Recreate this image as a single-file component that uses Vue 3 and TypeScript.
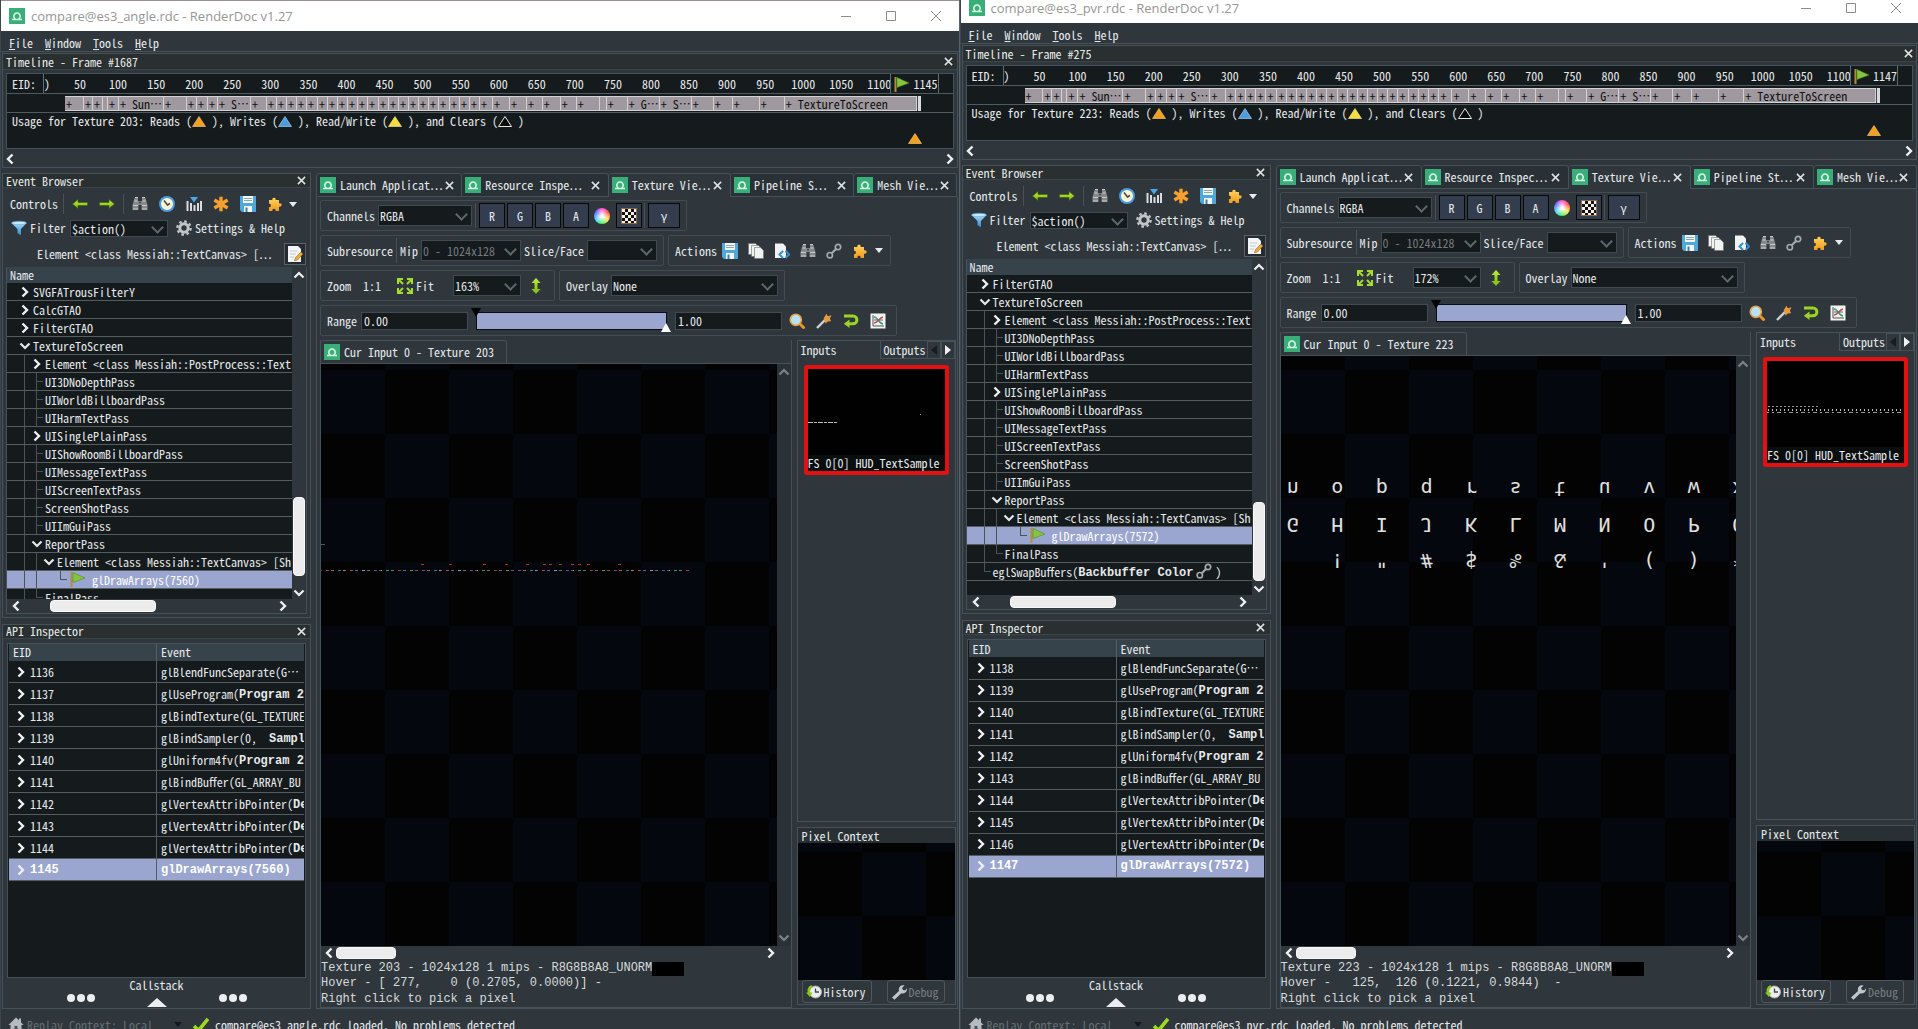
<script setup lang="ts">
interface TreeRow { cells: string; text: string; bold?: string; tail?: string; flag?: boolean; selected?: boolean }
interface Call { id: number; text: string; bold?: string; more?: boolean; selected?: boolean }
interface Tab { label: string; weight: number; active?: boolean }
interface Capture {
  key: string; file: string; frame: number; last: number; texture: number; zoom: string; hover: string
  tabs: Tab[]; tree: TreeRow[]; calls: Call[]; scroll: [number, number, number]; offset: boolean
}

const ticks: number[] = Array.from({ length: 22 }, (_, i) => (i + 1) * 50)

const starts: [number, string][] = [
  [65, '+'], [84, '+'], [93, '+'], [103, ''], [108, '+'], [119, '+ Sun'], [164, '+'], [187, '+'], [197, '+'], [208, '+'],
  [218, '+ S'], [251, '+'], [267, '+'],
  ...Array.from({ length: 20 }, (_, i): [number, string] => [277 + Math.round(i * 10.15), '+']),
  [480, '+'], [493, '+'], [510, '+'], [527, '+'], [543, '+'], [561, '+'], [577, '+'], [600, ''], [607, '+'],
  [628, '+ G'], [660, '+ S'], [692, '+'], [714, '+'], [733, '+'], [760, '+'], [785, '+ TextureToScreen'],
]
const shortened = ['+ Sun', '+ G', '+ S']
const segments = starts.map(([x, label], i) => ({
  label, more: shortened.includes(label), weight: (starts[i + 1]?.[0] ?? 917) - x,
}))

const share = (weight: number) => ({ flex: `${weight} 1 ${weight}px` })

const passes = (draw: string): TreeRow[] => [
  { cells: ' v', text: 'TextureToScreen' },
  { cells: ' |>', text: 'Element <class Messiah::PostProcess::Text:' },
  { cells: ' |t', text: 'UI3DNoDepthPass' },
  { cells: ' |t', text: 'UIWorldBillboardPass' },
  { cells: ' |t', text: 'UIHarmTextPass' },
  { cells: ' |>', text: 'UISinglePlainPass' },
  { cells: ' |t', text: 'UIShowRoomBillboardPass' },
  { cells: ' |t', text: 'UIMessageTextPass' },
  { cells: ' |t', text: 'UIScreenTextPass' },
  { cells: ' |t', text: 'ScreenShotPass' },
  { cells: ' |t', text: 'UIImGuiPass' },
  { cells: ' |v', text: 'ReportPass' },
  { cells: ' ||v', text: 'Element <class Messiah::TextCanvas> [Sh' },
  { cells: ' || L', text: draw, flag: true, selected: true },
  { cells: ' |L', text: 'FinalPass' },
]

const calls = (first: number, program: string, draw: string): Call[] => [
  { id: first, text: 'glBlendFuncSeparate(G', more: true },
  { id: first + 1, text: 'glUseProgram(', bold: 'Program ' + program },
  { id: first + 2, text: 'glBindTexture(GL_TEXTURE' },
  { id: first + 3, text: 'glBindSampler(0,  ', bold: 'Sampl' },
  { id: first + 4, text: 'glUniform4fv(', bold: 'Program ' + program },
  { id: first + 5, text: 'glBindBuffer(GL_ARRAY_BU' },
  { id: first + 6, text: 'glVertexAttribPointer(', bold: 'De' },
  { id: first + 7, text: 'glVertexAttribPointer(', bold: 'De' },
  { id: first + 8, text: 'glVertexAttribPointer(', bold: 'De' },
  { id: first + 9, text: draw, selected: true },
]

const captures: Capture[] = [
  {
    key: 'angle', file: 'compare@es3_angle.rdc', frame: 1687, last: 1145, texture: 203, zoom: '163%',
    hover: 'Hover - [ 277,    0 (0.2705, 0.0000)] -', offset: false, scroll: [216, 77, 11],
    tabs: [
      { label: 'Launch Applicat', weight: 146 }, { label: 'Resource Inspe', weight: 146 },
      { label: 'Texture Vie', weight: 122, active: true }, { label: 'Pipeline S', weight: 123 }, { label: 'Mesh Vie', weight: 103 },
    ],
    tree: [
      { cells: ' >', text: 'SVGFATrousFilterY' }, { cells: ' >', text: 'CalcGTAO' }, { cells: ' >', text: 'FilterGTAO' },
      ...passes('glDrawArrays(7560)'),
    ],
    calls: calls(1136, '20', 'glDrawArrays(7560)'),
  },
  {
    key: 'pvr', file: 'compare@es3_pvr.rdc', frame: 275, last: 1147, texture: 223, zoom: '172%',
    hover: 'Hover -   125,  126 (0.1221, 0.9844)  -', offset: true, scroll: [230, 78, 2],
    tabs: [
      { label: 'Launch Applicat', weight: 146 }, { label: 'Resource Inspec', weight: 147 },
      { label: 'Texture Vie', weight: 122, active: true }, { label: 'Pipeline St', weight: 123 }, { label: 'Mesh Vie', weight: 103 },
    ],
    tree: [
      { cells: ' >', text: 'FilterGTAO' },
      ...passes('glDrawArrays(7572)'),
      { cells: ' L', text: 'eglSwapBuffers(', bold: 'Backbuffer Color', tail: ')' },
    ],
    calls: calls(1138, '22', 'glDrawArrays(7572)'),
  },
]

const glyphRows: string[] = ['nopqrstuvwx', 'GHIJKLMNOPQ', ' !"#$%&\'()*']

const palette = ['#a83838', '#2f8f6f', '#4a55c0', '#9a9a9a', '#b84848', '#2d7a8a', '#7a459a', '#888833']
const sparks = Array.from({ length: 92 }, (_, i) => ({
  x: i * 4 + ((i * 7) % 3), w: 1 + ((i * 5) % 3), c: palette[(i * 5 + (i % 3)) % palette.length],
}))
const redSparks = [100, 128, 162, 184, 205, 222, 228, 238, 250, 257, 266, 297]
const miniDots = Array.from({ length: 34 }, (_, i) => i)
</script>

<template>
  <svg class="defs" aria-hidden="true">
    <defs>
      <linearGradient id="g-gold" x1="0" y1="0" x2="0" y2="1"><stop offset="0" stop-color="#ffd45e" /><stop offset="1" stop-color="#f29a1c" /></linearGradient>
      <linearGradient id="g-blue" x1="0" y1="0" x2="0" y2="1"><stop offset="0" stop-color="#a8dcfa" /><stop offset="1" stop-color="#2a86cf" /></linearGradient>
      <linearGradient id="g-green" x1="0" y1="0" x2="0" y2="1"><stop offset="0" stop-color="#c4ee3a" /><stop offset="1" stop-color="#79b80e" /></linearGradient>
    </defs>
    <symbol id="i-logo" viewBox="0 0 16 16"><rect width="16" height="16" fill="#38ae78" /><path d="M3 11.500h10M6.400 11a3.200 3.200 0 1 1 3.200 0" fill="none" stroke="#d8f5e6" stroke-width="1.600" /></symbol>
    <symbol id="i-x" viewBox="0 0 10 10"><path d="M1 1l8 8M9 1L1 9" stroke="#dfe3e5" stroke-width="1.700" /></symbol>
    <symbol id="i-left" viewBox="0 0 8 12"><path d="M6.500 1.500L2 6l4.500 4.500" fill="none" stroke="#eef0f1" stroke-width="2.400" /></symbol>
    <symbol id="i-right" viewBox="0 0 8 12"><path d="M1.500 1.500L6 6l-4.500 4.500" fill="none" stroke="#eef0f1" stroke-width="2.400" /></symbol>
    <symbol id="i-down" viewBox="0 0 12 8"><path d="M1.500 1.500L6 6l4.500-4.500" fill="none" stroke="currentColor" stroke-width="2.200" /></symbol>
    <symbol id="i-up" viewBox="0 0 12 8"><path d="M1.500 6.500L6 2l4.500 4.500" fill="none" stroke="currentColor" stroke-width="2.200" /></symbol>
    <symbol id="i-prev" viewBox="0 0 16 16"><path d="M0.500 8L6 3.500v3h9.500v3H6v3z" fill="url(#g-green)" stroke="#3d5c0a" stroke-width=".6" /></symbol>
    <symbol id="i-next" viewBox="0 0 16 16"><path d="M15.500 8L10 3.500v3H.5v3H10v3z" fill="url(#g-green)" stroke="#3d5c0a" stroke-width=".6" /></symbol>
    <symbol id="i-find" viewBox="0 0 16 16"><path d="M2.500 2h3.500v3h4V2h3.500l2 7v5H9.500V9h-3v5H.5V9z" fill="#85898c" /><path d="M3 1.500h3M10 1.500h3M2.500 5h3M10.500 5h3M1 9.500h5M10 9.500h5M1 13h5M10 13h5" stroke="#c9ccce" /><path d="M7 6.500h2" stroke="#444" stroke-width="1.500" /></symbol>
    <symbol id="i-clock" viewBox="0 0 16 16"><circle cx="8" cy="8" r="7" fill="#fdf6d4" stroke="#4a9be0" stroke-width="2" /><path d="M5 4.500L8.500 9l2.500-1.500" fill="none" stroke="#444" stroke-width="1.500" /></symbol>
    <symbol id="i-bars" viewBox="0 0 16 16"><path d="M1.500 5v10M5 7v8M8.500 9v6M12 7v8M15 5v10" stroke="#d9dcde" stroke-width="2" /><path d="M4 1h8L8 6.500z" fill="#4ca6e8" /></symbol>
    <symbol id="i-star" viewBox="0 0 16 16"><path d="M8 .8v14.400M1.400 4l13.200 8M14.600 4L1.400 12" stroke="#f7a02e" stroke-width="3.400" /></symbol>
    <symbol id="i-save" viewBox="0 0 16 16"><path d="M0 0h16v16H2l-2-2z" fill="#4fa8dc" /><path d="M3 0h10v7H3zM4 10h8v6H4z" fill="#f3f6f8" /><path d="M4 2.500h8M4 4.500h8" stroke="#8aa" /><path d="M5.500 11.500h2V16h-2z" fill="#3b7fae" /></symbol>
    <symbol id="i-puzzle" viewBox="0 0 16 16"><path d="M2 4h3.500C4.200 1 9.800 1 8.500 4H12v3.500c3.500-1.300 3.500 4.300 0 3V15H8.500c1-3-4-3-3 0H2v-4c2.500 1 2.500-4 0-3.200z" fill="url(#g-gold)" /></symbol>
    <symbol id="i-funnel" viewBox="0 0 16 16"><path d="M.5 3h15L10 9v6.500L6.500 13V9z" fill="url(#g-blue)" /><ellipse cx="8" cy="3" rx="7.500" ry="1.800" fill="#c6e9fb" stroke="#4a9fd8" stroke-width=".6" /></symbol>
    <symbol id="i-gear" viewBox="0 0 16 16"><circle cx="8" cy="8" r="4.200" fill="none" stroke="#c3c6c8" stroke-width="3" /><circle cx="8" cy="8" r="6.600" fill="none" stroke="#c3c6c8" stroke-width="2.400" stroke-dasharray="2.600 2.580" /></symbol>
    <symbol id="i-edit" viewBox="0 0 16 16"><path d="M1 0h10l3 3v13H1z" fill="#f4f5f6" /><path d="M3 5h7M3 8h6M3 11h4" stroke="#c6cacc" /><path d="M7.500 15l.8-3.200L14 6l2 2-5.600 6z" fill="#f1a93a" stroke="#80561a" stroke-width=".5" /></symbol>
    <symbol id="i-pages" viewBox="0 0 16 16"><g fill="#f1f2f2" stroke="#6a6f72" stroke-width=".6"><path d="M.5.500h7l2 2v9h-9z" /><path d="M3.500 2.500h7l2 2v9h-9z" /><path d="M6.500 4.500h6l3 3v8h-9z" /></g></symbol>
    <symbol id="i-code" viewBox="0 0 16 16"><path d="M1 .5h8l3 3V15H1z" fill="#f1f2f2" /><path d="M9 8l-3.500 3.500L9 15M11.500 8l3.500 3.500-3.500 3.500" fill="none" stroke="#2f8fd0" stroke-width="2" /></symbol>
    <symbol id="i-link" viewBox="0 0 16 16"><g fill="none" stroke="#a5a9ab" stroke-width="1.700"><circle cx="3.800" cy="12.200" r="2.700" /><circle cx="12" cy="4" r="2.700" /><path d="M5.500 10.500l5-5" stroke-width="2.200" /></g></symbol>
    <symbol id="i-fit" viewBox="0 0 16 16"><path d="M1 6V1h5M10 1h5v5M15 10v5h-5M6 15H1v-5" fill="none" stroke="#a6dc2c" stroke-width="2" /><path d="M2 2l4 4M14 2l-4 4M14 14l-4-4M2 14l4-4" stroke="#a6dc2c" stroke-width="2" /></symbol>
    <symbol id="i-updown" viewBox="0 0 10 16"><path d="M5 0l4.500 5H6.500v6h3L5 16 .5 11h3V5h-3z" fill="url(#g-green)" /></symbol>
    <symbol id="i-lens" viewBox="0 0 16 16"><path d="M10.500 10.500l4 4" stroke="#e8952a" stroke-width="3" stroke-linecap="round" /><circle cx="6.800" cy="6.800" r="5.600" fill="#b9e2f7" stroke="#e4a04a" stroke-width="1.600" /></symbol>
    <symbol id="i-wand" viewBox="0 0 16 16"><path d="M1 15l8-8" stroke="#cfd2d4" stroke-width="2.400" /><path d="M7.500 5.500L10.500.8l1.300 2.400 3.700-1-1.600 3.400 1.200 2.600-3.400.2-2 2.200z" fill="#e79a44" /></symbol>
    <symbol id="i-loop" viewBox="0 0 16 16"><path d="M1 3h9a3.800 3.800 0 0 1 0 7.800H6" fill="none" stroke="#9bd422" stroke-width="3" /><path d="M6.500 6.500v8.500L.8 10.800z" fill="#9bd422" /></symbol>
    <symbol id="i-graph" viewBox="0 0 16 16"><rect x=".5" y=".5" width="15" height="15" fill="#f3f4f4" /><path d="M3 2v11h11" fill="none" stroke="#555" /><path d="M4 4c4 0 5 7 9 7" fill="none" stroke="#3c9c4a" stroke-width="1.500" /><path d="M4 10c4 0 5-5 9-6" fill="none" stroke="#d2493a" stroke-width="1.500" /><path d="M4 7h9" stroke="#3e6fc4" /></symbol>
    <symbol id="i-flag" viewBox="0 0 16 16"><path d="M1.500 1v15" stroke="#b98a3a" stroke-width="2" /><path d="M3 1.500L15 7 3 11.500z" fill="#86c440" stroke="#4f8c22" stroke-width=".6" /></symbol>
    <symbol id="i-tri" viewBox="0 0 14 11"><path d="M7 .5L13.500 10.500H.5z" /></symbol>
    <symbol id="i-history" viewBox="0 0 16 16"><circle cx="9.500" cy="8" r="6" fill="#eceeee" stroke="#a9adaf" /><path d="M9.500 4.500V8H13" fill="none" stroke="#444" stroke-width="1.300" /><path d="M6 2.200C2.500 3.500 2 7 3.200 9.500" fill="none" stroke="#86c81e" stroke-width="2.400" /><path d="M0 8.500h6.500l-2.600 4.500z" fill="#86c81e" /></symbol>
    <symbol id="i-wrench" viewBox="0 0 16 16"><path d="M1 13.500L8 7C7 3 10 .5 13.500 1.500L11 4l1 2 2.500.2 1.500-2c.5 3.500-2.500 6-6 5.200L3.500 15.800z" fill="#c0c6cc" /></symbol>
    <symbol id="i-home" viewBox="0 0 16 16"><path d="M8 .5L.5 8H2.500v8h11V8h2L13 5.300V1.500h-2v1.800z" fill="#b5bac0" /><path d="M6.500 9h3v7h-3z" fill="#4b535a" /></symbol>
    <symbol id="i-check" viewBox="0 0 16 16"><path d="M1 9l4.500 4.500L15 2" fill="none" stroke="#9adb1e" stroke-width="3.600" /></symbol>
  </svg>

  <main class="desktop">
    <section v-for="c in captures" :key="c.key" class="win" :class="{ raised: c.offset }">
      <header class="title-bar">
        <svg class="ic"><use href="#i-logo" /></svg>
        <h1>{{ c.file }} - RenderDoc v1.27</h1>
        <button class="win-btn" aria-label="Minimise"><svg width="10" height="10"><path d="M0 5.500h10" stroke="#8c8c8c" /></svg></button>
        <button class="win-btn" aria-label="Maximise"><svg width="10" height="10"><path d="M.5.500h9v9h-9z" fill="none" stroke="#8c8c8c" /></svg></button>
        <button class="win-btn" aria-label="Close"><svg width="10" height="10"><path d="M0 0l10 10M10 0L0 10" stroke="#8c8c8c" /></svg></button>
      </header>

      <nav class="menu">
        <button><u>F</u>ile</button><button><u>W</u>indow</button><button><u>T</u>ools</button><button><u>H</u>elp</button>
      </nav>

      <section class="timeline">
        <div class="dock-title"><h2>Timeline - Frame #{{ c.frame }}</h2><button class="x" aria-label="Close timeline"><svg><use href="#i-x" /></svg></button></div>
        <div class="tl-box">
          <div class="tl-ticks">
            <span class="eid">EID:</span><span class="zero">)</span>
            <div class="ticks"><span v-for="t in ticks" :key="t">{{ t }}</span></div>
            <span class="current"><svg class="ic"><use href="#i-flag" /></svg>{{ c.last }}</span>
          </div>
          <div class="tl-bars">
            <div v-for="(s, i) in segments" :key="i" class="seg" :style="share(s.weight)">{{ s.label }}<span v-if="s.more" class="dots">⋯</span></div>
            <i class="seg-end"></i>
          </div>
          <div class="tl-usage">
            <p>Usage for Texture {{ c.texture }}: Reads (<svg class="tri read"><use href="#i-tri" /></svg> ), Writes (<svg class="tri write"><use href="#i-tri" /></svg> ), Read/Write (<svg class="tri rw"><use href="#i-tri" /></svg> ), and Clears (<svg class="tri clear"><use href="#i-tri" /></svg> )</p>
            <svg class="tri mark"><use href="#i-tri" /></svg>
          </div>
        </div>
        <div class="h-scroll wide"><svg class="ch"><use href="#i-left" /></svg><svg class="ch"><use href="#i-right" /></svg></div>
      </section>

      <div class="body">
        <div class="left">
          <section class="dock events">
            <div class="dock-title"><h2>Event Browser</h2><button class="x" aria-label="Close event browser"><svg><use href="#i-x" /></svg></button></div>
            <div class="controls">
              <span class="lbl">Controls</span><i class="sep"></i>
              <button aria-label="Back"><svg class="ic"><use href="#i-prev" /></svg></button>
              <button aria-label="Forward"><svg class="ic"><use href="#i-next" /></svg></button><i class="sep"></i>
              <button aria-label="Find"><svg class="ic"><use href="#i-find" /></svg></button>
              <button aria-label="Time"><svg class="ic"><use href="#i-clock" /></svg></button>
              <button aria-label="Columns"><svg class="ic"><use href="#i-bars" /></svg></button>
              <button aria-label="Bookmark"><svg class="ic"><use href="#i-star" /></svg></button>
              <button aria-label="Export"><svg class="ic"><use href="#i-save" /></svg></button>
              <button aria-label="Extensions"><svg class="ic"><use href="#i-puzzle" /></svg></button><i class="caret"></i>
            </div>
            <div class="filter">
              <svg class="ic"><use href="#i-funnel" /></svg>
              <label :for="'filter-' + c.key">Filter</label>
              <span class="combo w98"><select :id="'filter-' + c.key"><option>$action()</option></select></span>
              <button class="settings"><svg class="ic"><use href="#i-gear" /></svg>Settings &amp; Help</button>
            </div>
            <div class="crumb"><span>Element &lt;class Messiah::TextCanvas&gt; [<span class="dots">⋯</span></span><button class="edit" aria-label="Edit"><svg class="ic"><use href="#i-edit" /></svg></button></div>
            <div class="tree-box">
              <div class="tree-main">
                <div class="tree-head">Name</div>
                <div class="tree-rows">
                  <div v-for="(r, i) in c.tree" :key="i" class="row" :class="{ sel: r.selected }">
                    <span v-for="(g, j) in r.cells.split('')" :key="j" class="g" :class="{ line: g === '|' || g === 't', half: g === 'L', tee: g === 't' || g === 'L' }">
                      <svg v-if="g === '>'" class="ch"><use href="#i-right" /></svg>
                      <svg v-if="g === 'v'" class="cv"><use href="#i-down" /></svg>
                    </span>
                    <svg v-if="r.flag" class="ic flag"><use href="#i-flag" /></svg>
                    <span class="row-text">{{ r.text }}<b v-if="r.bold">{{ r.bold }}</b><svg v-if="r.tail" class="ic link"><use href="#i-link" /></svg>{{ r.tail }}</span>
                  </div>
                </div>
                <div class="h-scroll"><svg class="ch"><use href="#i-left" /></svg><i class="thumb tree-thumb"></i><svg class="ch"><use href="#i-right" /></svg></div>
              </div>
              <div class="v-scroll light">
                <svg class="cv"><use href="#i-up" /></svg>
                <div class="track"><i :style="{ flexGrow: c.scroll[0] }"></i><i class="thumb" :style="{ flexGrow: c.scroll[1] }"></i><i :style="{ flexGrow: c.scroll[2] }"></i></div>
                <svg class="cv"><use href="#i-down" /></svg>
              </div>
            </div>
          </section>

          <section class="dock api">
            <div class="dock-title"><h2>API Inspector</h2><button class="x" aria-label="Close API inspector"><svg><use href="#i-x" /></svg></button></div>
            <div class="api-box">
              <table>
                <thead><tr><th>EID</th><th>Event</th></tr></thead>
                <tbody>
                  <tr v-for="a in c.calls" :key="a.id" :class="{ sel: a.selected }">
                    <td><div class="cell"><svg class="ch"><use href="#i-right" /></svg>{{ a.id }}</div></td>
                    <td><div class="cell">{{ a.text }}<b v-if="a.bold">{{ a.bold }}</b><span v-if="a.more" class="dots">⋯</span></div></td>
                  </tr>
                </tbody>
              </table>
            </div>
            <button class="callstack">
              <span>Callstack</span>
              <span class="grip"><i></i><i></i><i></i><em></em><i></i><i></i><i></i></span>
            </button>
          </section>
        </div>

        <section class="main">
          <div class="tabs">
            <div v-for="t in c.tabs" :key="t.label" class="tab" :class="{ active: t.active }" :style="share(t.weight)">
              <svg class="ic"><use href="#i-logo" /></svg><span class="tab-label">{{ t.label }}<span class="dots">⋯</span></span><button class="x" :aria-label="'Close ' + t.label"><svg><use href="#i-x" /></svg></button>
            </div>
          </div>
          <div class="viewer">
            <div class="bars">
              <div class="group">
                <label :for="'ch-' + c.key">Channels</label>
                <span class="combo w94"><select :id="'ch-' + c.key"><option>RGBA</option></select></span><i class="sep"></i>
                <button class="chan">R</button><button class="chan">G</button><button class="chan">B</button><button class="chan">A</button>
                <button class="wheel" aria-label="Colour"><i></i></button>
                <button class="chan" aria-label="Checkerboard"><i class="check"></i></button><i class="sep"></i>
                <button class="chan gamma">γ</button>
              </div>
            </div>
            <div class="bars">
              <div class="group">
                <span>Subresource</span><i class="sep"></i>
                <label :for="'mip-' + c.key">Mip</label>
                <span class="combo w100"><select :id="'mip-' + c.key" disabled><option>0 - 1024x128</option></select></span>
                <label :for="'face-' + c.key">Slice/Face</label>
                <span class="combo w70"><select :id="'face-' + c.key" disabled><option></option></select></span>
              </div>
              <div class="group actions">
                <span>Actions</span>
                <button aria-label="Save"><svg class="ic"><use href="#i-save" /></svg></button>
                <button aria-label="Copy"><svg class="ic"><use href="#i-pages" /></svg></button>
                <button aria-label="Open shader"><svg class="ic"><use href="#i-code" /></svg></button>
                <button aria-label="Find usage"><svg class="ic"><use href="#i-find" /></svg></button>
                <button aria-label="Link"><svg class="ic"><use href="#i-link" /></svg></button>
                <button aria-label="Extensions"><svg class="ic"><use href="#i-puzzle" /></svg></button><i class="caret"></i>
              </div>
            </div>
            <div class="bars">
              <div class="group zoom">
                <label :for="'zoom-' + c.key">Zoom</label><button class="one">1:1</button>
                <button class="fit"><svg class="ic"><use href="#i-fit" /></svg>Fit</button>
                <span class="combo w68"><select :id="'zoom-' + c.key"><option>{{ c.zoom }}</option></select></span>
                <button class="flip" aria-label="Flip"><svg width="10" height="16"><use href="#i-updown" /></svg></button>
              </div>
              <div class="group">
                <label :for="'ov-' + c.key">Overlay</label>
                <span class="combo w167"><select :id="'ov-' + c.key"><option>None</option></select></span>
              </div>
            </div>
            <div class="bars">
              <div class="group range">
                <label :for="'lo-' + c.key">Range</label><input :id="'lo-' + c.key" type="text" value="0.00" />
                <span class="slider"><i class="lo"></i><i class="hi"></i></span>
                <input type="text" value="1.00" aria-label="Range maximum" />
                <button aria-label="Zoom range"><svg class="ic"><use href="#i-lens" /></svg></button>
                <button aria-label="Autofit"><svg class="ic"><use href="#i-wand" /></svg></button>
                <button aria-label="Reset"><svg class="ic"><use href="#i-loop" /></svg></button>
                <button aria-label="Histogram"><svg class="ic"><use href="#i-graph" /></svg></button>
              </div>
            </div>

            <div class="split">
              <div class="image">
                <div class="image-tab"><svg class="ic"><use href="#i-logo" /></svg>Cur Input 0 - Texture {{ c.texture }}</div>
                <div class="image-row">
                  <div class="canvas checker">
                    <svg v-if="!c.offset" class="sparks" width="456" height="40">
                      <rect v-for="(s, i) in sparks" :key="i" :x="s.x" y="27" :width="s.w" height="1" :fill="s.c" />
                      <rect v-for="x in redSparks" :key="x" :x="x" y="21" width="3" height="1" fill="#b82e24" />
                      <rect x="0" y="1" width="4" height="1" fill="#555" />
                    </svg>
                    <div v-else class="glyphs">
                      <div v-for="row in glyphRows" :key="row"><span v-for="(g, i) in row.split('')" :key="i">{{ g }}</span></div>
                    </div>
                  </div>
                  <div class="v-scroll dim"><svg class="cv"><use href="#i-up" /></svg><svg class="cv"><use href="#i-down" /></svg></div>
                </div>
                <div class="h-scroll canvas-scroll"><svg class="ch"><use href="#i-left" /></svg><i class="thumb image-thumb"></i><svg class="ch"><use href="#i-right" /></svg></div>
                <div class="info">
                  <p>Texture {{ c.texture }} - 1024x128 1 mips - R8G8B8A8_UNORM<i></i></p>
                  <p>{{ c.hover }}</p>
                  <p>Right click to pick a pixel</p>
                </div>
              </div>

              <div class="side">
                <section class="inputs">
                  <div class="side-tabs"><button class="on">Inputs</button><button>Outputs</button><button class="nudge off" aria-label="Scroll left"></button><button class="nudge" aria-label="Scroll right"></button></div>
                  <figure>
                    <svg v-if="!c.offset" class="mini" width="137" height="20">
                      <path d="M0 10.500h30" stroke="#bcbcbc" stroke-dasharray="5 1 3 1" /><rect x="112" y="2" width="1" height="1" fill="#aaa" />
                    </svg>
                    <svg v-else class="mini" width="137" height="20">
                      <template v-for="i in miniDots" :key="i">
                        <rect v-if="i < 13" :x="i * 4 + 1" y="2" width="2" height="1" fill="#999" />
                        <rect :x="i * 4 + 1" y="5" width="1" height="2" fill="#bbb" />
                        <rect :x="i * 4 + (i % 3)" y="8" width="2" height="1" fill="#999" />
                      </template>
                    </svg>
                    <figcaption>FS 0[0] HUD_TextSample</figcaption>
                  </figure>
                </section>
                <section class="pixel">
                  <h2>Pixel Context</h2>
                  <div class="checker ctx"></div>
                  <div class="pixel-btns">
                    <button><svg class="ic"><use href="#i-history" /></svg>History</button>
                    <button disabled><svg class="ic"><use href="#i-wrench" /></svg>Debug</button>
                  </div>
                </section>
              </div>
            </div>
          </div>
        </section>
      </div>

      <footer class="status">
        <svg class="ic"><use href="#i-home" /></svg><span class="ctx-name">Replay Context: Local</span><i class="caret dark"></i>
        <svg class="ic"><use href="#i-check" /></svg><span>{{ c.file }} loaded. No problems detected</span>
      </footer>
    </section>
  </main>
</template>

<style>
body { margin: 0; background: #2f373d; overflow: hidden; }
</style>

<style scoped>
* { box-sizing: border-box; }
.defs { position: absolute; width: 0; height: 0; }
.desktop {
  --bg: #2f373d; --line: #465259; --dark: #151a1d; --sel: #9aa6d0;
  display: flex; height: 100vh; overflow: hidden; color: #e6e9ea;
  font: 12px/16px "Noto Sans CJK SC", "Liberation Mono", monospace; font-feature-settings: "hwid"; white-space: pre;
}
button, select, input { font: inherit; font-feature-settings: inherit; color: inherit; background: none; border: 0; padding: 0; margin: 0; border-radius: 0; outline: 0; }
button { display: flex; align-items: center; justify-content: center; white-space: pre; }
h1, h2, p, figure { margin: 0; font-size: inherit; font-weight: inherit; }
svg { display: block; flex: none; }
i { font-style: normal; }
b { font-family: "Liberation Mono", monospace; font-weight: 700; padding-top: 2px; }
.dots { font-feature-settings: normal; }
.ic { width: 16px; height: 16px; }
.ch { width: 8px; height: 12px; }
.cv { width: 12px; height: 8px; }
.sep { width: 1px; align-self: stretch; margin: 2px 3px; background: var(--line); }
.caret { width: 0; height: 0; border: 4px solid transparent; border-top: 5px solid #e9ecee; border-bottom: 0; }

.win { flex: 1 1 0; min-width: 0; display: flex; flex-direction: column; background: var(--bg); border-right: 1px solid #59636a; border-left: 1px solid #3b4650; }
.raised { margin: -8px -1px 0 0; }
.title-bar { flex: none; height: 31px; border-top: 1px solid #9a8f94; background: #fff; display: flex; align-items: center; padding-left: 8px; }
.title-bar h1 { flex: 1; margin-left: 6px; font: 13px/20px "Open Sans", sans-serif; font-feature-settings: normal; color: #969696; }
.win-btn { width: 45px; height: 30px; }

.menu { flex: none; display: flex; gap: 12px; height: 21px; padding: 3px 8px 0; border-bottom: 1px solid var(--line); }
.menu button { height: 17px; }
.timeline { flex: none; margin: 1px 1px 5px; border: 1px solid var(--line); height: 115px; display: flex; flex-direction: column; }
.dock-title { flex: none; height: 16px; display: flex; align-items: center; justify-content: space-between; padding: 0 4px 0 3px; background: #29302f; border-bottom: 1px solid #3a454b; line-height: 14px; }
.timeline .dock-title { padding-right: 3px; }
.x { width: 10px; height: 10px; }
.x svg { width: 9px; height: 9px; }
.tl-box { margin: 3px 3px 0; border: 1px solid var(--line); height: 77px; background: var(--dark); }
.tl-ticks { display: flex; height: 20px; line-height: 20px; border-bottom: 1px solid #4e5b60; }
.eid { width: 37px; padding-left: 5px; border-right: 1px solid #5c7078; }
.zero { width: 17px; overflow: hidden; }
.ticks { flex: 1; display: flex; }
.ticks span { flex: 1 1 0; width: 0; display: flex; justify-content: center; }
.current { display: flex; align-items: center; margin: 0 14px 0 -8px; padding-left: 3px; border: solid #5c7078; border-width: 0 1px; }
.current .ic { margin-right: 3px; }
.tl-bars { display: flex; height: 19px; padding: 2px 32px 1px 58px; border-bottom: 1px solid #4e5b60; color: #111; }
.seg { display: flex; min-width: 0; overflow: hidden; background: #9f999f; border: 1px solid #d4d1d4; border-left-width: 0; padding-left: 1px; line-height: 14px; }
.seg-end { flex: none; width: 4px; background: #d8dae0; border-left: 1px solid #40474c; }
.tl-usage { padding: 0 31px 0 5px; }
.tl-usage p { display: flex; align-items: center; height: 16px; }
.tri { width: 14px; height: 11px; margin: 0; fill: #f2a01e; stroke: #f8d28a; stroke-width: .6; }
.tri.write { fill: #4c9ce0; stroke: #b9e0fa; }
.tri.rw { fill: #f6dc3c; stroke: #fbf3a8; }
.tri.clear { fill: #0a0a0a; stroke: #e8e8e8; stroke-width: 1; }
.tri.mark { margin: 4px 0 0 auto; fill: #f2a01e; }

.h-scroll { flex: none; display: flex; align-items: center; justify-content: space-between; height: 14px; padding: 0 5px; }
.h-scroll.wide { height: 18px; padding: 2px 3px 0; }
.thumb { display: block; background: #ececec; border-radius: 4px; border: 1px solid #f9f9f9; }

.body { flex: 1; min-height: 0; display: flex; gap: 5px; padding: 0 1px; }
.left { width: 309px; flex: none; display: flex; flex-direction: column; gap: 6px; }
.dock { border: 1px solid var(--line); min-height: 0; display: flex; flex-direction: column; }
.dock .dock-title { height: 14px; }
.events { flex: 445 1 0; }
.api { flex: 385 1 0; }
.controls { flex: none; display: flex; align-items: center; gap: 11px; height: 28px; padding: 4px 0 0 7px; }
.controls .sep { margin: 2px -3px; }
.controls .lbl { margin-right: -3px; }
.controls .caret { margin-left: -5px; }
.filter { flex: none; display: flex; align-items: center; height: 24px; padding-left: 8px; }
.filter label { margin: 0 4px 0 3px; }
.settings { margin-left: 8px; gap: 3px; }
.combo { position: relative; display: flex; height: 21px; }
.combo::after { content: ""; position: absolute; right: 6px; top: 5px; width: 7px; height: 7px; border: solid #5d686f; border-width: 0 2px 2px 0; transform: rotate(45deg); pointer-events: none; }
.combo select { appearance: none; width: 100%; background: var(--dark); border: 1px solid #3f4a51; padding-left: 1px; opacity: 1; }
.combo select:disabled { color: #73797d; }
.filter .combo { height: 17px; }
.filter .combo::after { top: 3px; }
.w98 { width: 98px; } .w94 { width: 94px; } .w100 { width: 100px; } .w70 { width: 70px; } .w68 { width: 68px; } .w167 { width: 167px; }
.crumb { flex: none; display: flex; align-items: center; justify-content: space-between; height: 27px; padding: 0 4px 0 34px; }
.edit { width: 22px; height: 22px; border: 1px solid #566168; background: #252c31; }
.tree-box { flex: 1; min-height: 0; display: flex; margin: 0 3px 3px; border: 1px solid var(--line); border-top: 0; }
.tree-main { flex: 1; min-width: 0; display: flex; flex-direction: column; }
.tree-head { flex: none; height: 16px; padding-left: 3px; background: #37434a; }
.tree-rows { flex: 1; min-height: 0; overflow: hidden; background: var(--dark); }
.row { display: flex; height: 18px; border-bottom: 1px solid #565d60; overflow: hidden; line-height: 17px; }
.row.sel, tr.sel { background: var(--sel); color: #fff; }
.g { position: relative; flex: none; width: 12px; display: flex; align-items: center; justify-content: center; }
.line::before, .half::before { content: ""; position: absolute; left: 5px; top: 0; width: 1px; height: 18px; background: #4b5357; }
.half::before { height: 9px; }
.tee::after { content: ""; position: absolute; left: 5px; top: 8px; width: 7px; height: 1px; background: #4b5357; }
.row-text { display: flex; padding-left: 2px; }
.flag { margin: 0 4px 0 3px; }
.link { margin: 0 3px; }
.tree-thumb { width: 106px; height: 12px; margin: 0 auto 0 30px; }
.v-scroll { flex: none; width: 14px; display: flex; flex-direction: column; align-items: center; justify-content: space-between; padding: 4px 0; color: #eef0f1; }
.v-scroll.light { padding-bottom: 16px; }
.v-scroll.dim { color: #7d8386; background: #2a3238; }
.track { flex: 1; display: flex; flex-direction: column; margin: 2px 0; }
.track i { width: 12px; flex: 1 1 0; }

.api .dock-title { margin-bottom: 4px; }
.api-box { flex: 1; min-height: 0; margin: 0 4px; padding: 0 1px; border: 1px solid var(--line); background: var(--dark); overflow: hidden; }
table { table-layout: fixed; width: 100%; border-collapse: collapse; }
th { height: 17px; padding: 0 0 0 4px; font-weight: 400; text-align: left; background: #37434a; line-height: 16px; }
td { height: 22px; padding: 0 0 0 4px; border-bottom: 1px solid #565d60; }
th + th, td + td { border-left: 1px solid #565d60; }
.cell { display: flex; align-items: center; height: 21px; overflow: hidden; }
.cell .ch { margin: 0 5px 0 4px; }
tr.sel { font-family: "Liberation Mono", monospace; font-weight: 700; }
.callstack { flex: none; height: 30px; flex-direction: column; justify-content: flex-start; }
.callstack > span:first-child { height: 13px; line-height: 13px; }
.grip { display: flex; align-items: center; gap: 2px; height: 14px; }
.grip i { width: 8px; height: 8px; border-radius: 4px; background: #ebedee; }
.grip em { border: 10px solid transparent; border-bottom: 9px solid #ebedee; border-top: 0; margin: 9px 50px 0; }

.main { flex: 1; min-width: 0; display: flex; flex-direction: column; }
.tabs { flex: none; display: flex; height: 24px; }
.tab { min-width: 0; display: flex; align-items: center; padding: 0 7px 0 3px; background: #2a3136; border: 1px solid var(--line); border-width: 1px 1px 1px 0; border-radius: 3px 3px 0 0; }
.tab:first-child { border-left-width: 1px; }
.tab.active { background: var(--bg); border-bottom-color: var(--bg); }
.tab-label { flex: 1; min-width: 0; padding-left: 4px; }
.viewer { flex: 1; min-height: 0; display: flex; flex-direction: column; padding: 3px 1px 0 3px; border: solid var(--line); border-width: 0 1px 1px; }
.bars { flex: none; display: flex; gap: 4px; height: 31px; margin-bottom: 4px; }
.group { display: flex; align-items: center; gap: 3px; padding: 0 6px; border: 1px solid #414c53; border-radius: 2px; }
.group .sep { margin: 2px 0; }
.chan { width: 26px; height: 25px; background: #333d4e; border: 1px solid #06090c; margin-right: -1px; }
.gamma { width: 32px; margin-right: 0; }
.wheel { width: 22px; }
.wheel i { width: 16px; height: 16px; border-radius: 8px; background: radial-gradient(#fff 5%, transparent 70%), conic-gradient(#ff4fd8, #ff4040, #ffe640, #40f060, #40d0ff, #5060ff, #ff4fd8); }
.check { width: 14px; height: 14px; background: repeating-conic-gradient(#111 0 25%, #f6f0e6 0 50%) 0 0 / 6px 6px; outline: 1px solid #8c6a48; }
.actions { gap: 10px; padding-right: 7px; }
.actions span { margin-right: -5px; }
.actions .caret { margin-left: -3px; }
.one { margin-left: 9px; }
.fit { margin: 0 16px 0 13px; gap: 3px; }
.flip { margin: 0 7px; }
.range { gap: 11px; padding-right: 10px; }
.range label { margin-right: -7px; }
.range input { width: 107px; height: 18px; padding-left: 2px; background: var(--dark); border: 1px solid #3f4a51; }
.range button:first-of-type { margin-left: -4px; }
.slider { position: relative; width: 191px; height: 18px; margin: 0 -3px; background: var(--sel); border: 1px solid #0a0d10; }
.slider i { position: absolute; border: 5px solid transparent; }
.lo { left: -6px; top: -5px; border-top: 9px solid #050607 !important; border-bottom: 0 !important; }
.hi { right: -5px; bottom: -3px; border-bottom: 9px solid #fff !important; border-top: 0 !important; }

.split { flex: 1; min-height: 0; display: flex; gap: 5px; }
.image { flex: 1; min-width: 0; display: flex; flex-direction: column; border: solid var(--line); border-width: 0 1px 1px; }
.image-tab { flex: none; align-self: flex-start; display: flex; align-items: center; gap: 4px; height: 23px; width: 186px; padding-left: 3px; border: 1px solid var(--line); border-width: 1px 1px 0 0; border-radius: 3px 3px 0 0; }
.image-row { flex: 1; min-height: 0; display: flex; border-top: 1px solid var(--line); }
.canvas { position: relative; flex: 1; min-width: 0; overflow: hidden; }
.checker { background: repeating-conic-gradient(#04070d 0 25%, #020302 0 50%) left bottom / 128px 128px; }
.sparks { position: absolute; left: 0; bottom: 363px; }
.glyphs { position: absolute; left: -10px; top: 115px; width: 490px; color: #e0e0e0; font: 20px/36px "DejaVu Sans Mono", monospace; font-feature-settings: normal; }
.glyphs div { display: flex; }
.glyphs span { flex: 1 1 0; height: 36px; text-align: center; transform: scaleY(-1); }
.canvas-scroll { height: 13px; padding: 0 16px 0 4px; }
.image-thumb { width: 60px; height: 12px; margin: 0 auto 0 3px; }
.info { flex: none; padding-top: 2px; font: 12px/15px "Liberation Mono", monospace; font-feature-settings: normal; color: #d6dadb; }
.info p { display: flex; height: 15px; align-items: center; }
.info p:last-child { height: 16px; }
.info i { width: 32px; height: 14px; background: #000; }

.side { width: 159px; flex: none; display: flex; flex-direction: column; gap: 5px; margin-bottom: 3px; }
.inputs { flex: 482 1 0; min-height: 0; border: 1px solid var(--line); border-top: 0; }
.side-tabs { display: flex; height: 19px; border-top: 1px solid var(--line); }
.side-tabs button { justify-content: flex-start; padding-left: 3px; }
.side-tabs .on { width: 83px; border-right: 1px solid var(--line); }
.side-tabs button:nth-child(2) { width: 46px; border-bottom: 1px solid var(--line); }
.side-tabs .nudge { width: 14px; padding: 0; justify-content: center; border: 1px solid var(--line); }
.nudge::before { content: ""; border: 5px solid transparent; border-left: 6px solid #eef0f1; border-right: 0; }
.nudge.off::before { border-left: 0; border-right: 6px solid #171c1f; }
figure { position: relative; height: 110px; margin: 6px 6px 0 6px; border: 4px solid #e41010; border-radius: 3px; background: #010101; display: flex; flex-direction: column; }
.mini { margin-top: 43px; }
figcaption { margin-top: auto; height: 16px; background: #0b0e0f; overflow: hidden; }
.pixel { flex: 176 1 0; min-height: 0; display: flex; flex-direction: column; border: 1px solid var(--line); }
.pixel h2 { flex: none; height: 15px; padding-left: 4px; background: #293034; }
.ctx { flex: 1; }
.pixel-btns { flex: none; display: flex; gap: 15px; height: 24px; padding-left: 4px; }
.pixel-btns button { height: 23px; padding: 0 5px 0 3px; gap: 2px; border: 1px solid #4d585f; border-radius: 3px; }
.pixel-btns button:disabled { color: #747b7f; }

.status { flex: none; display: flex; height: 20px; overflow: hidden; padding: 8px 0 0 7px; }
.status .ctx-name { margin-left: 3px; color: #656d72; }
.dark { border-top-color: #14181b; margin: 5px 11px 0 21px; }
.status .ic + span:last-child { margin-left: 6px; }
</style>
